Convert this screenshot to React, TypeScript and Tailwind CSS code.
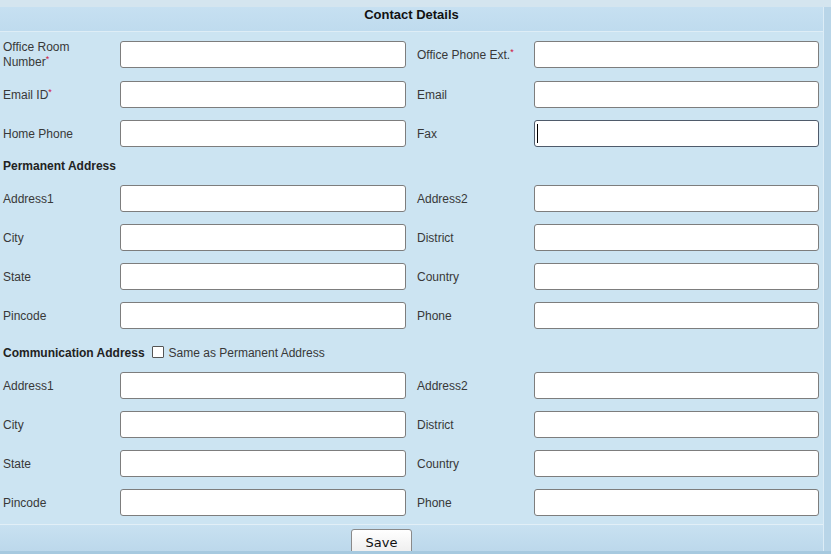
import React from "react";

type Field = { label: React.ReactNode; required?: boolean; focused?: boolean };

function Req() {
  return <span className="relative -top-[4px] text-[9px] text-[#d0103a]">*</span>;
}

function TextBox({ focused }: { focused?: boolean }) {
  return (
    <div
      className={`relative h-[27px] rounded-[3px] border bg-white ${
        focused ? "border-[#4f5b6b]" : "border-[#7d7d7d]"
      }`}
    >
      {focused && <span className="absolute left-[2px] top-[3px] h-[19px] w-px bg-black" />}
    </div>
  );
}

function Row({ left, right }: { left: Field; right: Field }) {
  return (
    <div className="grid h-[27px] grid-cols-[120px_286px_128px_285px] grid-rows-[27px] items-center">
      <div className="pl-[3px] pt-[2px] leading-[15px]">
        {left.label}
        {left.required && <Req />}
      </div>
      <TextBox focused={left.focused} />
      <div className="pl-[11px] pt-[2px] leading-[15px]">
        {right.label}
        {right.required && <Req />}
      </div>
      <TextBox focused={right.focused} />
    </div>
  );
}

const addressRows: [string, string][] = [
  ["Address1", "Address2"],
  ["City", "District"],
  ["State", "Country"],
  ["Pincode", "Phone"],
];

export default function App() {
  return (
    <div className="flex h-[554px] w-[831px] flex-col overflow-hidden bg-[#cce4f2] font-['Liberation_Sans',Arial,sans-serif] text-[12px] text-[#383838]">
      {/* top strip */}
      <div className="h-[7px] shrink-0 bg-[#d4e5ef]" />

      <div className="flex min-h-0 flex-1">
        <div className="flex w-[824px] shrink-0 flex-col border-r border-[#dcecf6]">
          {/* header */}
          <div className="h-[25px] shrink-0 border-b border-[#deedf6] bg-gradient-to-b from-[#c6e0f1] to-[#bfdbee] text-center text-[13px] font-bold leading-[15px] text-[#111]">
            Contact Details
          </div>

          <div className="flex flex-1 flex-col pt-[9px]">
            <Row
              left={{ label: <>Office Room<br />Number</>, required: true }}
              right={{ label: "Office Phone Ext.", required: true }}
            />
            <div className="mt-[13px] flex flex-col gap-3">
              <Row left={{ label: "Email ID", required: true }} right={{ label: "Email" }} />
              <Row left={{ label: "Home Phone" }} right={{ label: "Fax", focused: true }} />
            </div>

            <div className="mt-[10px] flex h-[16px] items-center pl-[3px] pt-[2px] font-bold text-[#222]">
              Permanent Address
            </div>

            <div className="mt-3 flex flex-col gap-3">
              {addressRows.map(([l, r]) => (
                <Row key={"p" + l} left={{ label: l }} right={{ label: r }} />
              ))}
            </div>

            <div className="mt-[15px] flex h-[16px] items-center pl-[3px] pt-[2px]">
              <span className="font-bold text-[#222]">Communication Address</span>
              <span className="ml-[7px] mr-[5px] mt-[-3px] inline-block h-[12px] w-[12px] rounded-[1px] border border-[#555] bg-white" />
              <span>Same as Permanent Address</span>
            </div>

            <div className="mt-3 flex flex-col gap-3">
              {addressRows.map(([l, r]) => (
                <Row key={"c" + l} left={{ label: l }} right={{ label: r }} />
              ))}
            </div>

            {/* footer bar */}
            <div className="mt-auto flex h-[27px] shrink-0 overflow-hidden border-t border-[#e2eff7] bg-gradient-to-b from-[#c8e1f1] to-[#bcd8eb] pl-[351px] pt-[4px]">
              <button className="h-[28px] w-[61px] shrink-0 rounded-t-[3px] border border-[#8a8a8a] bg-gradient-to-b from-white to-[#ececec] font-['DejaVu_Sans',sans-serif] text-[13px] text-[#111]">
                Save
              </button>
            </div>
          </div>
        </div>
        <div className="flex-1 bg-[#b8d5e8]" />
      </div>

      {/* bottom strip */}
      <div className="h-[3px] shrink-0 bg-[#a6c9df]" />
    </div>
  );
}
